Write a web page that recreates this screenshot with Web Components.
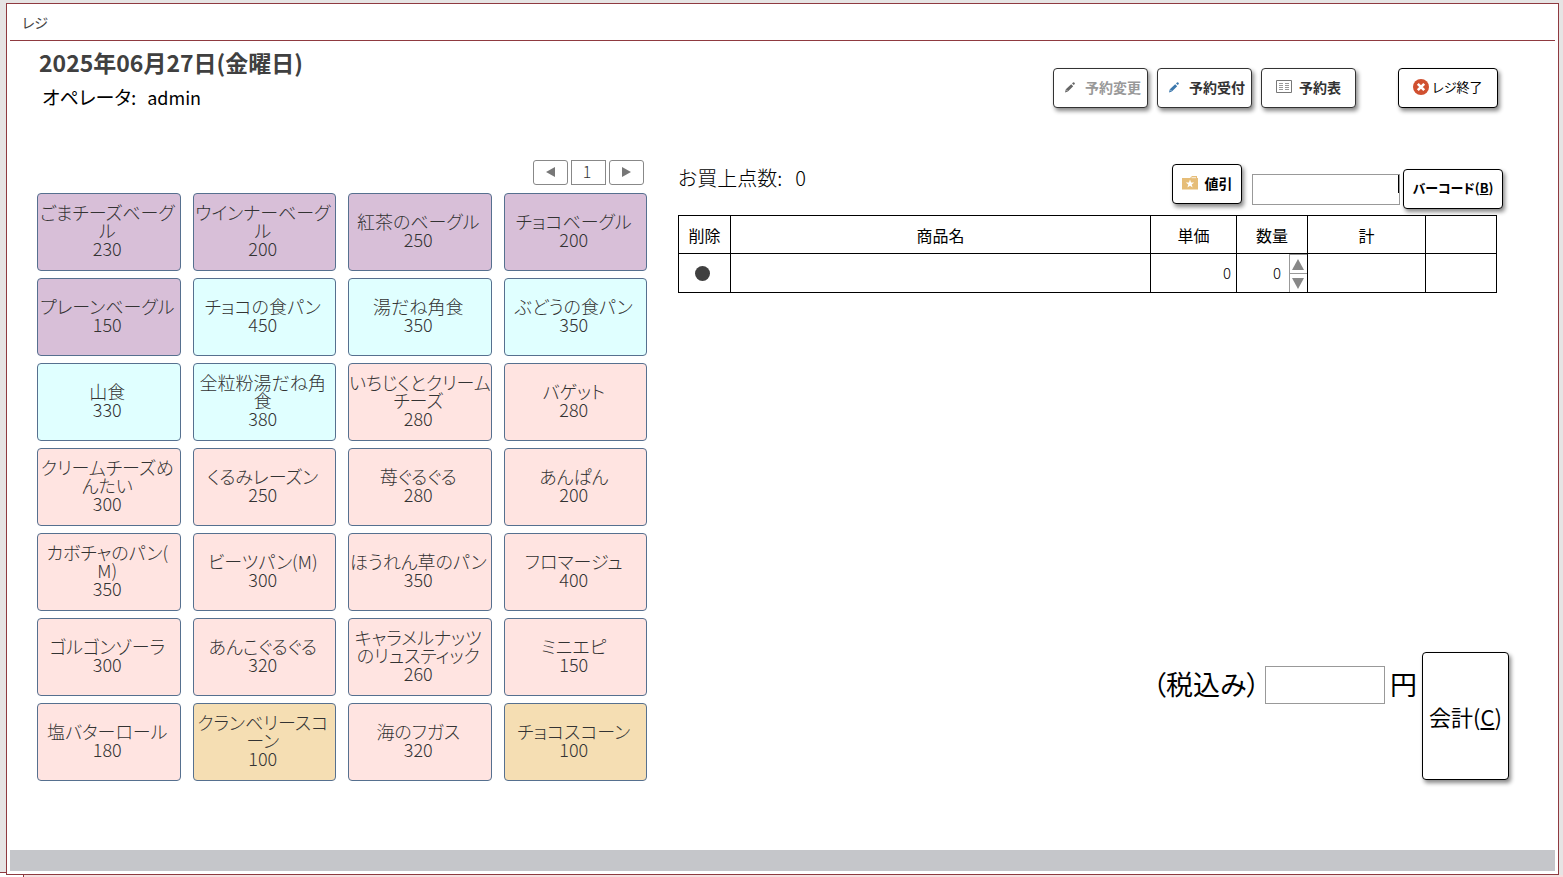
<!DOCTYPE html>
<html lang="ja">
<head>
    <meta charset="utf-8">
    <title>レジ</title>
    <style>
        body {
            margin: 0;
            color: #000;
            font-family: "Noto Sans CJK JP", "Liberation Sans", sans-serif;
            font-size: 16px;
            font-feature-settings: "palt";
            background:
                linear-gradient(#8f3a40, #8f3a40) 23px 100% / 1px 2px no-repeat,
                linear-gradient(#8f3a40, #8f3a40) 0 calc(100% - 4px) / 7px 1px no-repeat,
                linear-gradient(#fff, #fff) 0 100% / 23px 4px no-repeat,
                linear-gradient(#f6dfdf, #f6dfdf) 0 100% / 100% 2px no-repeat,
                #e6e4e4;
        }
    </style>
</head>
<body>
    <register-window caption="レジ">
        <register-header slot="header" date="2025年06月27日(金曜日)" operator="admin">
            <tool-button disabled><pos-icon slot="icon" name="pencil"></pos-icon>予約変更</tool-button>
            <tool-button><pos-icon slot="icon" name="pencil-blue"></pos-icon>予約受付</tool-button>
            <tool-button><pos-icon slot="icon" name="list"></pos-icon>予約表</tool-button>
            <tool-button class="quit" plain><pos-icon slot="icon" name="close"></pos-icon>レジ終了</tool-button>
        </register-header>
        <product-panel slot="products"></product-panel>
        <sale-panel slot="sale"></sale-panel>
    </register-window>

    <script>
        class PosElement extends HTMLElement {
            connectedCallback() {
                if (!this.shadowRoot) {
                    this.attachShadow({mode: 'open'}).innerHTML = this.template;
                }
            }
        }

        class RegisterWindow extends PosElement {
            get template() {
                return `
                    <style>
                        :host {
                            display: flex;
                            box-sizing: border-box;
                            min-height: 100vh;
                            padding: 3px 4px 2px 6px;
                        }

                        .frame {
                            flex: 1;
                            display: flex;
                            flex-direction: column;
                            border: 1px solid #8f3a40;
                            background: #fff;
                        }

                        .caption {
                            margin: 0 3px;
                            padding: 0 12px;
                            border-bottom: 1px solid #8f3a40;
                            color: #444;
                            font-size: 14px;
                            font-weight: 400;
                            line-height: 36px;
                        }

                        main {
                            flex: 1;
                            padding: 8px 49px 0 30px;
                        }

                        .columns {
                            display: grid;
                            grid-template-columns: 610fr 831fr;
                            gap: 31px;
                            margin-top: 51px;
                        }

                        footer {
                            height: 21px;
                            margin: 0 3px 3px;
                            background: #c5c6ca;
                        }
                    </style>
                    <div class="frame">
                        <h1 class="caption">${this.getAttribute('caption')}</h1>
                        <main>
                            <slot name="header"></slot>
                            <div class="columns">
                                <slot name="products"></slot>
                                <slot name="sale"></slot>
                            </div>
                        </main>
                        <footer></footer>
                    </div>
                `;
            }
        }

        class RegisterHeader extends PosElement {
            get template() {
                return `
                    <style>
                        :host {
                            display: flex;
                            justify-content: space-between;
                            align-items: flex-start;
                        }

                        h2 {
                            margin: 0 0 10px 2px;
                            color: #404040;
                            font-size: 23px;
                            line-height: 26px;
                        }

                        p {
                            display: flex;
                            gap: 11px;
                            margin: 0 0 0 5px;
                            font-size: 19px;
                            line-height: 24px;
                        }

                        .operator {
                            font-size: 18px;
                        }

                        nav {
                            display: flex;
                            gap: 9px;
                            padding: 19px 11px 0 0;
                        }

                        ::slotted(.quit) {
                            margin-left: 33px;
                        }
                    </style>
                    <div>
                        <h2>${this.getAttribute('date')}</h2>
                        <p><span>オペレータ:</span><span class="operator">${this.getAttribute('operator')}</span></p>
                    </div>
                    <nav><slot></slot></nav>
                `;
            }
        }

        class ToolButton extends PosElement {
            get template() {
                return `
                    <style>
                        :host {
                            display: block;
                        }

                        button {
                            display: flex;
                            align-items: center;
                            justify-content: center;
                            gap: 7px;
                            box-sizing: border-box;
                            width: 100%;
                            min-width: 95px;
                            height: 40px;
                            padding: 0 4px 2px;
                            border: 1px solid #333;
                            border-radius: 4px;
                            background: #fff;
                            box-shadow: 2px 3px 4px #888;
                            color: #333;
                            font: inherit;
                            font-feature-settings: inherit;
                            font-size: 14px;
                            font-weight: 700;
                            line-height: 18px;
                            white-space: nowrap;
                        }

                        button:disabled {
                            color: #999;
                        }

                        :host([plain]) button {
                            gap: 3px;
                            min-width: 100px;
                            border-color: #000;
                            color: #000;
                            font-size: 13px;
                            font-weight: 400;
                        }

                        :host([compact]) button {
                            min-width: 70px;
                            border-color: #000;
                            color: #000;
                        }

                        :host([wide]) button {
                            min-width: 100px;
                            gap: 0;
                            border-color: #000;
                            color: #000;
                            font-size: 13px;
                        }
                    </style>
                    <button type="button" ${this.hasAttribute('disabled') ? 'disabled' : ''}>
                        <slot name="icon"></slot><span><slot></slot></span>
                    </button>
                `;
            }
        }

        const pencil = color => `
            <svg width="18" height="14" viewBox="0 0 18 14">
                <path fill="${color}" d="M5 12.500l.8-3.300 5.400-5 2 2.100-5.300 5.100zM12 3.400l1-.9q.8-.5 1.500.2t.2 1.400l-.9.900z"/>
                <path stroke="#fff" stroke-width=".6" d="M6.200 9.700l1.500 1.600"/>
            </svg>`;

        const icons = {
            'pencil': pencil('#666'),
            'pencil-blue': pencil('#3b78ad'),
            'list': `
                <svg width="16" height="14" viewBox="0 0 16 14" fill="none" stroke="#777">
                    <path d="M.5 .5h15v12h-15z"/>
                    <path d="M3 3.500h4M3 5.500h4M3 7.500h4M3 9.500h4M9 3.500h4M9 5.500h4M9 7.500h4M9 9.500h4" stroke="#999"/>
                </svg>`,
            'close': `
                <svg width="16" height="16" viewBox="0 0 16 16">
                    <circle cx="8" cy="8" r="8" fill="#d05030"/>
                    <path d="M4.800 4.800l6.400 6.400M11.200 4.800l-6.400 6.400" stroke="#fff" stroke-width="2.600"/>
                </svg>`,
            'favorite': `
                <svg width="16" height="14" viewBox="0 0 16 14">
                    <path fill="#e6bd78" d="M0 2h8l2-2h5v2h1v11.500H0z"/>
                    <path stroke="#fff" stroke-width=".8" d="M9.500 1.700h4.500"/>
                    <path fill="#fff" d="M8 3.500l1.100 2.900 3.100.1-2.500 1.900.9 3L8 9.700l-2.600 1.700.9-3-2.500-1.900 3.100-.1z"/>
                </svg>`,
            'prev': '<svg width="10" height="10" viewBox="0 0 10 10"><path fill="#777" d="M9 0v10L0 5z"/></svg>',
            'next': '<svg width="10" height="10" viewBox="0 0 10 10"><path fill="#777" d="M0 0v10l9-5z"/></svg>',
            'up': '<svg width="12" height="11" viewBox="0 0 12 11"><path fill="#888" d="M6 0l6 11H0z"/></svg>',
            'down': '<svg width="12" height="11" viewBox="0 0 12 11"><path fill="#888" d="M0 0h12L6 11z"/></svg>'
        };

        class PosIcon extends PosElement {
            get template() {
                return `
                    <style>
                        :host {
                            display: inline-flex;
                        }
                    </style>
                    ${icons[this.getAttribute('name')]}
                `;
            }
        }

        class PageSelector extends PosElement {
            get template() {
                return `
                    <style>
                        :host {
                            display: flex;
                            justify-content: flex-end;
                            gap: 3px;
                            padding-right: 3px;
                        }

                        button, input {
                            box-sizing: border-box;
                            width: 35px;
                            height: 25px;
                            padding: 0;
                            border: 1px solid #888;
                            background: #fff;
                        }

                        button {
                            border-radius: 3px;
                        }

                        input {
                            padding: 0 3px 4px 0;
                            color: #333;
                            font: inherit;
                            font-weight: 300;
                            text-align: center;
                        }
                    </style>
                    <button type="button" aria-label="前のページ"><pos-icon name="prev"></pos-icon></button>
                    <input type="text" value="1" aria-label="ページ">
                    <button type="button" aria-label="次のページ"><pos-icon name="next"></pos-icon></button>
                `;
            }
        }

        class ProductTile extends PosElement {
            get template() {
                return `
                    <style>
                        :host {
                            display: block;
                        }

                        button {
                            box-sizing: border-box;
                            width: 100%;
                            height: 78px;
                            padding: 0 3px 4px 0;
                            border: 1px solid #56708f;
                            border-radius: 4px;
                            background: var(--tile-color);
                            color: #333;
                            font: inherit;
                            font-feature-settings: inherit;
                            font-size: 18px;
                            font-weight: 300;
                            line-height: 18px;
                            white-space: pre;
                        }
                    </style>
                    <button type="button"><slot></slot></button>
                `;
            }
        }

        const products = [
            ['ごまチーズベーグ\nル', 230, 'bagel'],
            ['ウインナーベーグ\nル', 200, 'bagel'],
            ['紅茶のベーグル', 250, 'bagel'],
            ['チョコベーグル', 200, 'bagel'],
            ['プレーンベーグル', 150, 'bagel'],
            ['チョコの食パン', 450, 'loaf'],
            ['湯だね角食', 350, 'loaf'],
            ['ぶどうの食パン', 350, 'loaf'],
            ['山食', 330, 'loaf'],
            ['全粒粉湯だね角\n食', 380, 'loaf'],
            ['いちじくとクリーム\nチーズ', 280, 'bread'],
            ['バゲット', 280, 'bread'],
            ['クリームチーズめ\nんたい', 300, 'bread'],
            ['くるみレーズン', 250, 'bread'],
            ['苺ぐるぐる', 280, 'bread'],
            ['あんぱん', 200, 'bread'],
            ['カボチャのパン(\nM)', 350, 'bread'],
            ['ビーツパン(M)', 300, 'bread'],
            ['ほうれん草のパン', 350, 'bread'],
            ['フロマージュ', 400, 'bread'],
            ['ゴルゴンゾーラ', 300, 'bread'],
            ['あんこぐるぐる', 320, 'bread'],
            ['キャラメルナッツ\nのリュスティック', 260, 'bread'],
            ['ミニエピ', 150, 'bread'],
            ['塩バターロール', 180, 'bread'],
            ['クランベリースコ\nーン', 100, 'scone'],
            ['海のフガス', 320, 'bread'],
            ['チョコスコーン', 100, 'scone']
        ];

        class ProductPanel extends PosElement {
            get template() {
                const tiles = products.map(([name, price, kind]) =>
                    `<product-tile class="${kind}">${name}\n${price}</product-tile>`).join('');

                return `
                    <style>
                        :host {
                            display: block;
                        }

                        .tiles {
                            display: grid;
                            grid-template-columns: repeat(4, minmax(0, 1fr));
                            gap: 7px 12px;
                            margin-top: 8px;
                        }

                        .bagel { --tile-color: #d8bfd8; }
                        .loaf { --tile-color: #e0ffff; }
                        .bread { --tile-color: #ffe4e1; }
                        .scone { --tile-color: #f5deb3; }
                    </style>
                    <page-selector></page-selector>
                    <div class="tiles">${tiles}</div>
                `;
            }
        }

        class SaleTable extends PosElement {
            get template() {
                return `
                    <style>
                        :host {
                            display: block;
                        }

                        table {
                            width: 100%;
                            table-layout: fixed;
                            border-collapse: collapse;
                            line-height: 20px;
                        }

                        th, td {
                            box-sizing: border-box;
                            height: 39px;
                            padding: 0;
                            border: 1px solid #000;
                            font-weight: 400;
                        }

                        th {
                            height: 38px;
                        }

                        .delete { width: 52px; }
                        .price { width: 86px; }
                        .count { width: 71px; }
                        .sum { width: 118px; }

                        td.delete {
                            padding: 0 4px 4px 0;
                            text-align: center;
                        }

                        td.delete button {
                            width: 15px;
                            height: 15px;
                            padding: 0;
                            border: 0;
                            border-radius: 50%;
                            background: #404040;
                            vertical-align: middle;
                        }

                        td.price {
                            padding-right: 5px;
                            font-size: 15px;
                            font-weight: 300;
                            text-align: right;
                        }

                        .stepper {
                            display: flex;
                            align-items: center;
                        }

                        input {
                            flex: 1;
                            min-width: 0;
                            padding: 0 8px 0 0;
                            border: 0;
                            font: inherit;
                            font-size: 15px;
                            font-weight: 300;
                            text-align: right;
                        }

                        .arrows {
                            display: grid;
                            grid-template-rows: 19px 19px;
                            width: 18px;
                        }

                        .arrows button {
                            display: flex;
                            align-items: center;
                            justify-content: center;
                            padding: 0 2px 0 0;
                            border: solid #999;
                            border-width: 1px 0 0 1px;
                            background: #fff;
                        }
                    </style>
                    <table>
                        <thead>
                            <tr>
                                <th class="delete">削除</th>
                                <th>商品名</th>
                                <th class="price">単価</th>
                                <th class="count">数量</th>
                                <th class="sum">計</th>
                                <th class="count"></th>
                            </tr>
                        </thead>
                        <tbody>
                            <tr>
                                <td class="delete"><button type="button" aria-label="削除"></button></td>
                                <td></td>
                                <td class="price">0</td>
                                <td>
                                    <div class="stepper">
                                        <input type="text" value="0" aria-label="数量">
                                        <div class="arrows">
                                            <button type="button" aria-label="増やす"><pos-icon name="up"></pos-icon></button>
                                            <button type="button" aria-label="減らす"><pos-icon name="down"></pos-icon></button>
                                        </div>
                                    </div>
                                </td>
                                <td></td>
                                <td></td>
                            </tr>
                        </tbody>
                    </table>
                `;
            }
        }

        class SalePanel extends PosElement {
            get template() {
                return `
                    <style>
                        :host {
                            display: flex;
                            flex-direction: column;
                        }

                        .bar {
                            display: flex;
                            align-items: flex-start;
                            height: 55px;
                            padding-right: 6px;
                        }

                        .count {
                            display: flex;
                            gap: 13px;
                            margin: 0 auto 0 0;
                            font-size: 20px;
                            font-weight: 300;
                            line-height: 36px;
                        }

                        .discount {
                            padding-top: 4px;
                        }

                        .barcode {
                            display: flex;
                            align-items: center;
                            gap: 3px;
                            padding: 9px 0 0 10px;
                        }

                        input {
                            box-sizing: border-box;
                            border: 1px solid #999;
                            background: #fff;
                            font: inherit;
                            text-align: right;
                        }

                        .barcode input {
                            width: 148px;
                            height: 31px;
                            background: linear-gradient(#000, #000) 100% 0 / 1px 18px no-repeat #fff;
                        }

                        sale-table {
                            margin-right: 12px;
                        }

                        .checkout {
                            display: flex;
                            align-items: flex-start;
                            justify-content: flex-end;
                            gap: 5px;
                            margin-top: auto;
                            font-size: 27px;
                            line-height: 36px;
                        }

                        .checkout > * {
                            margin-top: 14px;
                        }

                        .checkout input {
                            width: 120px;
                            height: 38px;
                        }

                        .checkout button {
                            box-sizing: border-box;
                            width: 87px;
                            height: 128px;
                            margin: 0 0 1px;
                            padding: 0;
                            border: 1px solid #000;
                            border-radius: 4px;
                            background: #fff;
                            box-shadow: 2px 3px 4px #888;
                            color: #000;
                            font: inherit;
                            font-feature-settings: inherit;
                            font-size: 22px;
                        }
                    </style>
                    <div class="bar">
                        <p class="count"><span>お買上点数:</span><span>0</span></p>
                        <tool-button class="discount" compact><pos-icon slot="icon" name="favorite"></pos-icon>値引</tool-button>
                        <div class="barcode">
                            <input type="text" aria-label="バーコード">
                            <tool-button wide>バーコード(<u>B</u>)</tool-button>
                        </div>
                    </div>
                    <sale-table></sale-table>
                    <div class="checkout">
                        <label for="total">（税込み）</label>
                        <input id="total" type="text">
                        <span>円</span>
                        <button type="button">会計(<u>C</u>)</button>
                    </div>
                `;
            }
        }

        customElements.define('pos-icon', PosIcon);
        customElements.define('tool-button', ToolButton);
        customElements.define('page-selector', PageSelector);
        customElements.define('product-tile', ProductTile);
        customElements.define('product-panel', ProductPanel);
        customElements.define('sale-table', SaleTable);
        customElements.define('sale-panel', SalePanel);
        customElements.define('register-header', RegisterHeader);
        customElements.define('register-window', RegisterWindow);
    </script>
</body>
</html>
